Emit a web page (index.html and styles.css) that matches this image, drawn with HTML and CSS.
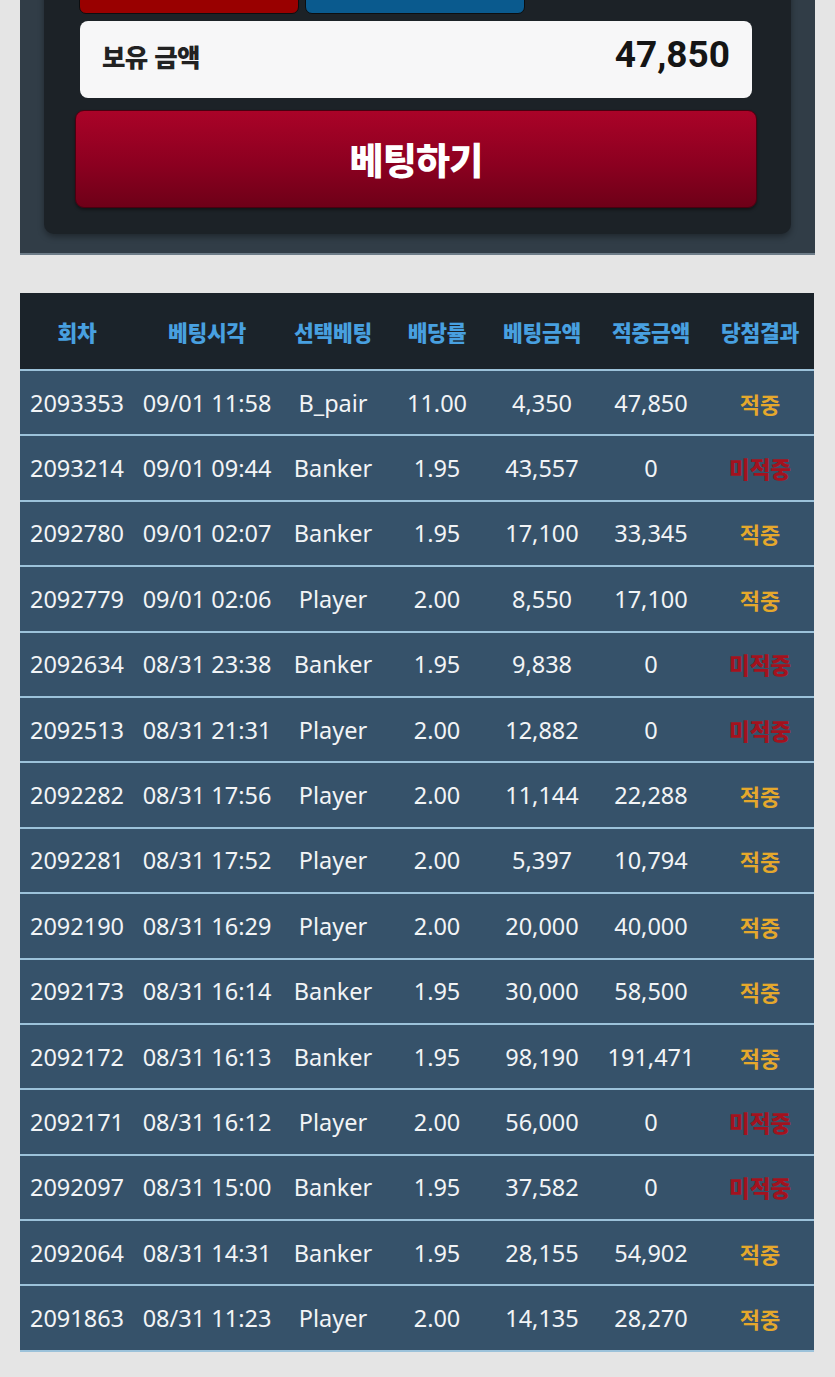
FILE: index.html
```html
<!DOCTYPE html>
<html lang="ko">
<head>
<meta charset="utf-8">
<link rel="stylesheet" href="styles.css">
</head>
<body>
<div class="panel">
  <div class="inner">
    <div class="chips">
      <div class="chip chip-red"></div>
      <div class="chip chip-blue"></div>
    </div>
    <div class="balance">
      <span class="balance-label">보유 금액</span>
      <span class="balance-value">47,850</span>
    </div>
    <button class="bet-btn">베팅하기</button>
  </div>
</div>

<table class="history">
  <colgroup>
    <col class="c1"><col class="c2"><col class="c3"><col class="c4"><col class="c5"><col class="c6"><col class="c7">
  </colgroup>
  <thead>
    <tr><th>회차</th><th>베팅시각</th><th>선택베팅</th><th>배당률</th><th>베팅금액</th><th>적중금액</th><th>당첨결과</th></tr>
  </thead>
  <tbody>
    <tr><td>2093353</td><td>09/01 11:58</td><td>B_pair</td><td>11.00</td><td>4,350</td><td>47,850</td><td class="win">적중</td></tr>
    <tr><td>2093214</td><td>09/01 09:44</td><td>Banker</td><td>1.95</td><td>43,557</td><td>0</td><td class="lose">미적중</td></tr>
    <tr><td>2092780</td><td>09/01 02:07</td><td>Banker</td><td>1.95</td><td>17,100</td><td>33,345</td><td class="win">적중</td></tr>
    <tr><td>2092779</td><td>09/01 02:06</td><td>Player</td><td>2.00</td><td>8,550</td><td>17,100</td><td class="win">적중</td></tr>
    <tr><td>2092634</td><td>08/31 23:38</td><td>Banker</td><td>1.95</td><td>9,838</td><td>0</td><td class="lose">미적중</td></tr>
    <tr><td>2092513</td><td>08/31 21:31</td><td>Player</td><td>2.00</td><td>12,882</td><td>0</td><td class="lose">미적중</td></tr>
    <tr><td>2092282</td><td>08/31 17:56</td><td>Player</td><td>2.00</td><td>11,144</td><td>22,288</td><td class="win">적중</td></tr>
    <tr><td>2092281</td><td>08/31 17:52</td><td>Player</td><td>2.00</td><td>5,397</td><td>10,794</td><td class="win">적중</td></tr>
    <tr><td>2092190</td><td>08/31 16:29</td><td>Player</td><td>2.00</td><td>20,000</td><td>40,000</td><td class="win">적중</td></tr>
    <tr><td>2092173</td><td>08/31 16:14</td><td>Banker</td><td>1.95</td><td>30,000</td><td>58,500</td><td class="win">적중</td></tr>
    <tr><td>2092172</td><td>08/31 16:13</td><td>Banker</td><td>1.95</td><td>98,190</td><td>191,471</td><td class="win">적중</td></tr>
    <tr><td>2092171</td><td>08/31 16:12</td><td>Player</td><td>2.00</td><td>56,000</td><td>0</td><td class="lose">미적중</td></tr>
    <tr><td>2092097</td><td>08/31 15:00</td><td>Banker</td><td>1.95</td><td>37,582</td><td>0</td><td class="lose">미적중</td></tr>
    <tr><td>2092064</td><td>08/31 14:31</td><td>Banker</td><td>1.95</td><td>28,155</td><td>54,902</td><td class="win">적중</td></tr>
    <tr><td>2091863</td><td>08/31 11:23</td><td>Player</td><td>2.00</td><td>14,135</td><td>28,270</td><td class="win">적중</td></tr>
  </tbody>
</table>
</body>
</html>
```

FILE: styles.css
```css
html, body {
  margin: 0;
  padding: 0;
}
body {
  background: #e5e5e5;
  padding: 0 20px 40px;
  font-family: "Noto Sans", "Noto Sans CJK KR", sans-serif;
  overflow: hidden;
}

.panel {
  margin-top: -50px;
  background: #313d47;
  padding: 0 24px 19px;
  border-bottom: 2px solid #6d7c88;
}
.inner {
  background: #1c2227;
  border-radius: 0 0 10px 10px;
  padding: 10px 39px 26px 35px;
  box-shadow: 0 3px 6px rgba(0, 0, 0, 0.35);
}
.chips {
  display: flex;
  gap: 6px;
  height: 54px;
}
.chip {
  width: 220px;
  height: 54px;
  box-sizing: border-box;
  border-radius: 7px;
  border: 1px solid #0c0e10;
}
.chip-red { background: #990000; }
.chip-blue { background: #0a5a8e; }

.balance {
  margin: 7px 0 0 1px;
  height: 77px;
  background: #f7f7f8;
  border-radius: 8px;
  display: flex;
  align-items: center;
  justify-content: space-between;
  padding: 0 22px 0 22px;
  box-sizing: border-box;
}
.balance-label {
  font-family: "Noto Sans CJK KR", sans-serif;
  font-weight: 900;
  font-size: 25.5px;
  color: #222;
  letter-spacing: -0.6px;
  margin-top: -9px;
}
.balance-value {
  font-family: Roboto, "Liberation Sans", sans-serif;
  font-weight: 700;
  font-size: 37px;
  color: #151515;
  margin-top: -10px;
}

.bet-btn {
  display: block;
  margin: 12px -5px 0 -4px;
  width: calc(100% + 9px);
  height: 98px;
  border: 1px solid #4a0010;
  border-radius: 9px;
  background: linear-gradient(to bottom, #aa0328 0%, #8c0020 55%, #6e0018 100%);
  color: #fff;
  font-family: "Noto Sans CJK KR", sans-serif;
  font-weight: 900;
  font-size: 37px;
  letter-spacing: -0.8px;
  box-shadow: 0 2px 3px rgba(0, 0, 0, 0.4);
  padding: 0;
}

.history {
  margin-top: 38px;
  width: 794px;
  border-collapse: collapse;
  table-layout: fixed;
}
.c1 { width: 114px; }
.c2 { width: 146px; }
.c3 { width: 106px; }
.c4 { width: 102px; }
.c5 { width: 108px; }
.c6 { width: 110px; }
.c7 { width: 108px; }

.history th {
  background: #1b232a;
  color: #48a0e0;
  font-family: "Noto Sans CJK KR", sans-serif;
  font-weight: 900;
  font-size: 21.5px;
  letter-spacing: -0.3px;
  height: 76px;
  padding: 0;
  text-align: center;
  border-bottom: 2px solid #9cc2da;
  white-space: nowrap;
}
.history td {
  background: #36526a;
  color: #f2f4f6;
  font-size: 23.5px;
  height: 63.4px;
  padding: 0;
  text-align: center;
  white-space: nowrap;
  border-bottom: 2px solid #9cc2da;
}
.history td.win {
  color: #e5a82c;
  font-family: "Noto Sans CJK KR", sans-serif;
  font-size: 22px;
  font-weight: 700;
}
.history td.lose {
  color: #a3121e;
  font-family: "Noto Sans CJK KR", sans-serif;
  font-size: 22.5px;
  font-weight: 900;
}
```
